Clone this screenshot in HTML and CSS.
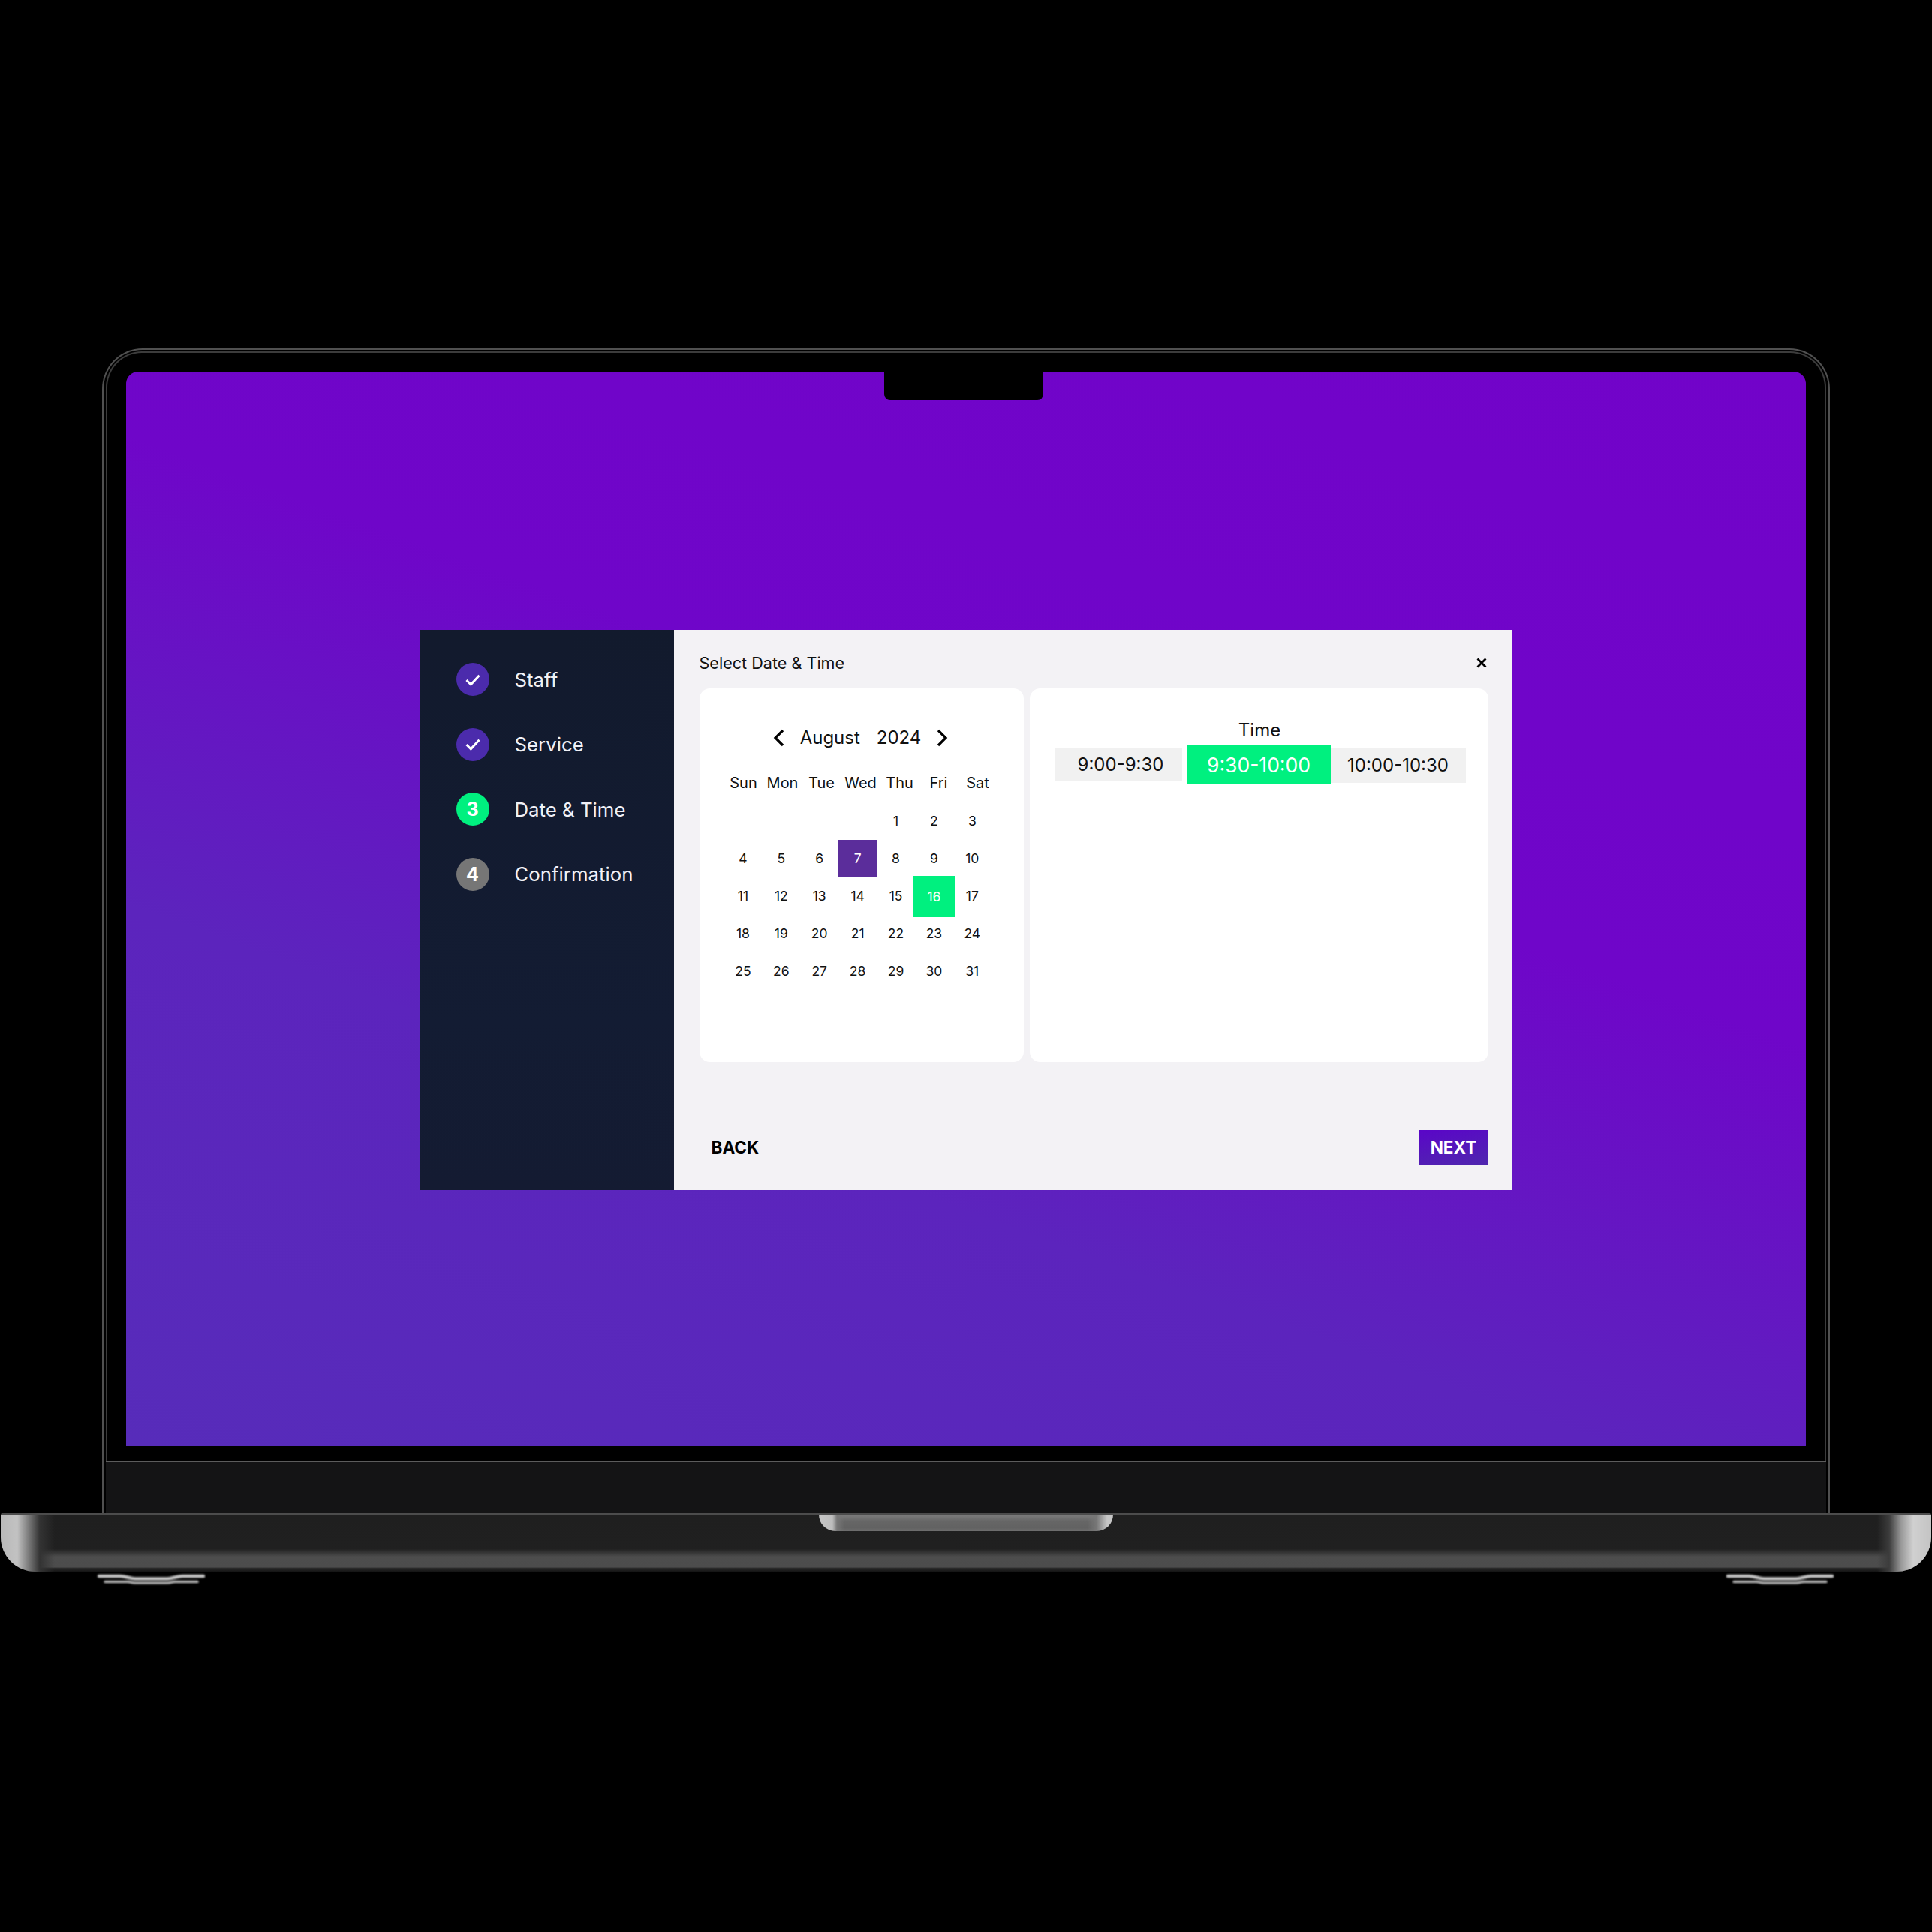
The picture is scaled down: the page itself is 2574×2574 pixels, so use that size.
FILE: index.html
```html
<!DOCTYPE html>
<html lang="en">
<head>
<meta charset="utf-8">
<title>Select Date &amp; Time</title>
<link rel="stylesheet" href="styles.css">
</head>
<body>
<div class="page">
  <div class="lid">
    <div class="lid-inner">
      <div class="bezel">
        <div class="screen">
          <div class="notch"></div>
          <div class="modal">
            <aside class="sidebar">
              <div class="step"><span class="badge badge-done"><svg class="check" viewBox="0 0 20 16"><path d="M2 8.5 7.5 14 18 2.500"/></svg></span><span class="step-label">Staff</span></div>
              <div class="step"><span class="badge badge-done"><svg class="check" viewBox="0 0 20 16"><path d="M2 8.5 7.5 14 18 2.500"/></svg></span><span class="step-label">Service</span></div>
              <div class="step"><span class="badge badge-active">3</span><span class="step-label">Date &amp; Time</span></div>
              <div class="step"><span class="badge badge-todo">4</span><span class="step-label">Confirmation</span></div>
            </aside>
            <main class="main">
              <header class="head">
                <h1 class="title">Select Date &amp; Time</h1>
                <svg class="close" viewBox="0 0 14 14"><path d="M1.500 1.500 12.500 12.500M12.500 1.500 1.500 12.500"/></svg>
              </header>
              <div class="cards">
                <section class="card card-cal">
                  <div class="cal-nav">
                    <svg class="chev" viewBox="0 0 20 24"><path d="M15 2 5 12 15 22"/></svg>
                    <span class="month">August</span>
                    <span class="year">2024</span>
                    <svg class="chev" viewBox="0 0 20 24"><path d="M5 2 15 12 5 22"/></svg>
                  </div>
                  <div class="weekdays">
                    <span>Sun</span><span>Mon</span><span>Tue</span><span>Wed</span><span>Thu</span><span>Fri</span><span>Sat</span>
                  </div>
                  <div class="dates">
                    <span></span><span></span><span></span><span></span><span>1</span><span>2</span><span>3</span>
                    <span>4</span><span>5</span><span>6</span><span class="date-sel">7</span><span>8</span><span>9</span><span>10</span>
                    <span>11</span><span>12</span><span>13</span><span>14</span><span>15</span><span class="date-on">16</span><span>17</span>
                    <span>18</span><span>19</span><span>20</span><span>21</span><span>22</span><span>23</span><span>24</span>
                    <span>25</span><span>26</span><span>27</span><span>28</span><span>29</span><span>30</span><span>31</span>
                  </div>
                </section>
                <section class="card card-time">
                  <h2 class="time-title">Time</h2>
                  <div class="slots">
                    <span class="slot slot-a">9:00-9:30</span>
                    <span class="slot slot-b">9:30-10:00</span>
                    <span class="slot slot-c">10:00-10:30</span>
                  </div>
                </section>
              </div>
              <footer class="foot">
                <span class="back">BACK</span>
                <span class="next">NEXT</span>
              </footer>
            </main>
          </div>
        </div>
      </div>
      <div class="chin"></div>
    </div>
  </div>
  <div class="base"><div class="hinge"></div></div>
  <div class="feet">
    <svg class="foot-shape" viewBox="0 0 143 14"><path class="foot-top" d="M2 3H30C38 3 42 6 50 6.500H93C101 6 105 3 113 3H141"/><path class="foot-low" d="M10 10.500H40C44 10.500 44 12 50 12H93C99 12 99 10.500 103 10.500H133"/></svg>
    <svg class="foot-shape" viewBox="0 0 143 14"><path class="foot-top" d="M2 3H30C38 3 42 6 50 6.500H93C101 6 105 3 113 3H141"/><path class="foot-low" d="M10 10.500H40C44 10.500 44 12 50 12H93C99 12 99 10.500 103 10.500H133"/></svg>
  </div>
</div>
</body>
</html>
```
FILE: styles.css
```css
* { box-sizing: border-box; margin: 0; padding: 0; }
html, body { background: #000; }
body { font-family: Inter, "Noto Sans", sans-serif; color: #111; }

.page {
  width: 2574px;
  height: 2574px;
  padding-top: 464px;
  background: #000;
  display: flex;
  flex-direction: column;
  align-items: center;
  overflow: hidden;
}

/* laptop */
.lid {
  width: 2302px;
  padding: 2px 3px 0;
  border: 2px solid #505050;
  border-bottom: 0;
  border-radius: 54px 54px 0 0;
}
.lid-inner {
  border: 2px solid #3c3c3c;
  border-bottom: 0;
  border-radius: 48px 48px 0 0;
  background: #000;
}
.bezel { padding: 25px 25px 20px; }
.screen {
  position: relative;
  height: 1432px;
  padding-top: 3px;
  border-radius: 16px 16px 0 0;
  display: flex;
  align-items: center;
  justify-content: center;
  background:
    linear-gradient(200deg, #7203c9 0%, #6f06c9 40%, #5c24bd 68%, #572cba 100%);
}
.notch {
  position: absolute;
  top: 0;
  left: 1010px;
  width: 212px;
  height: 38px;
  background: #000;
  border-radius: 0 0 8px 8px;
}
.chin {
  height: 69px;
  margin: 0 -2px;
  background: #141415;
  border-top: 1px solid #5c5c5c;
}
.base {
  width: 2572px;
  height: 78px;
  border-top: 2px solid #4c4c4c;
  border-radius: 2px 2px 46px 46px;
  display: flex;
  justify-content: center;
  background:
    linear-gradient(90deg, #b9b9b9 0, #c2c2c2 22px, #8a8a8a 34px, #333 52px, rgba(30,30,30,0) 72px, rgba(30,30,30,0) calc(100% - 72px), #3c3c3c calc(100% - 56px), #999 calc(100% - 40px), #d0d0d0 calc(100% - 24px), #c4c4c4 100%),
    linear-gradient(180deg, #1f1f1f 0, #202020 60%, #3a3a3a 68%, #4d4d4d 74%, #4c4c4c 92%, #2a2a2a 94%, #141414 100%);
}
.hinge {
  width: 392px;
  height: 22px;
  border-radius: 0 0 22px 22px;
  background:
    linear-gradient(90deg, #c6c6c6 0, #bdbdbd 18px, #777 24px, rgba(100,100,100,0) 34px, rgba(100,100,100,0) calc(100% - 34px), #777 calc(100% - 22px), #c6c6c6 calc(100% - 8px)),
    linear-gradient(180deg, #7d7d7d 0, #666 40%, #626262 80%, #6e6e6e 100%);
}
.feet {
  width: 2574px;
  padding: 3px 131px 0 130px;
  display: flex;
  justify-content: space-between;
}
.foot-shape { width: 143px; height: 14px; display: block; filter: blur(0.8px); }
.foot-shape path { fill: none; stroke-linecap: round; }
.foot-top { stroke: #c4c4c4; stroke-width: 4.500; }
.foot-low { stroke: #b0b0b0; stroke-width: 3.500; }

/* modal */
.modal {
  width: 1455px;
  height: 745px;
  display: flex;
}
.sidebar {
  width: 338px;
  padding: 43px 0 0 48px;
  background: linear-gradient(180deg, #121a2d, #131c33 70%, #141b32);
  display: flex;
  flex-direction: column;
  gap: 42.67px;
}
.step { display: flex; align-items: center; gap: 34px; height: 44px; }
.step-label { font-size: 25.800px; color: #f1f1f6; }
.badge {
  width: 44px;
  height: 44px;
  border-radius: 50%;
  display: flex;
  align-items: center;
  justify-content: center;
  flex: none;
  color: #fff;
  font-size: 25px;
  font-weight: 700;
}
.badge-done { background: #4b2bac; }
.badge-active { background: #00f07f; }
.badge-todo { background: #767676; }
.check { width: 22px; height: 17px; }
.check path { fill: none; stroke: #fff; stroke-width: 2.800; }

.main {
  flex: 1;
  padding: 0 32px 33px 34px;
  background: #f3f2f5;
  display: flex;
  flex-direction: column;
}
.head {
  padding: 26px 2px 0 0;
  height: 77px;
  flex: none;
  display: flex;
  justify-content: space-between;
  align-items: flex-start;
}
.title { font-size: 21.600px; font-weight: 400; line-height: 34px; color: #111; }
.close { width: 14px; height: 14px; margin-top: 10px; }
.close path { fill: none; stroke: #000; stroke-width: 2.800; }

.cards { display: flex; gap: 8px; height: 498px; flex: none; }
.card { background: #fff; border-radius: 14px; }
.card-cal { width: 432px; padding: 50px 0 0 33px; flex: none; }
.card-time { flex: 1; padding: 40px 30px 0 34px; }

.cal-nav {
  width: 364px;
  height: 32px;
  display: flex;
  align-items: center;
  justify-content: center;
  font-size: 24px;
  line-height: 32px;
}
.month { margin: 0 22px 0 18px; }
.year { margin-right: 18px; }
.chev { width: 20px; height: 24px; flex: none; }
.chev path { fill: none; stroke: #000; stroke-width: 3.200; }

.weekdays {
  margin-top: 30px;
  display: grid;
  grid-template-columns: repeat(7, 52px);
  grid-auto-rows: 28px;
  font-size: 20px;
  line-height: 28px;
  text-align: center;
}
.dates {
  margin-top: 12px;
  display: grid;
  grid-template-columns: repeat(7, 50.9px);
  grid-auto-rows: 50px;
  font-size: 17.500px;
  line-height: 50px;
  text-align: center;
}
.date-sel { background: #5b2d9b; color: #fff; }
.date-on { background: #00f07f; color: #fff; margin: -2px -3px -3px; line-height: 55px; }

.time-title {
  font-size: 24px;
  font-weight: 400;
  line-height: 32px;
  text-align: center;
  color: #111;
  padding-right: 2px;
}
.slots {
  margin-top: 4px;
  display: flex;
  align-items: flex-start;
  font-size: 24px;
}
.slot { display: flex; align-items: center; justify-content: center; }
.slot-a { width: 169px; height: 45px; margin: 3px 7px 0 0; padding-left: 6px; background: #f1f1f1; }
.slot-b { width: 191px; height: 51px; background: #00f07f; color: #fff; font-size: 26.500px; }
.slot-c { width: 180px; height: 47px; margin-top: 3px; background: #f1f1f1; }

.foot {
  margin-top: auto;
  display: flex;
  justify-content: space-between;
  align-items: center;
  font-size: 22.500px;
  font-weight: 700;
}
.back { padding-left: 16px; color: #000; }
.next {
  width: 92px;
  height: 47px;
  display: flex;
  align-items: center;
  justify-content: center;
  color: #fff;
  background: linear-gradient(170deg, #5a05c8, #4f27ae);
}
```
